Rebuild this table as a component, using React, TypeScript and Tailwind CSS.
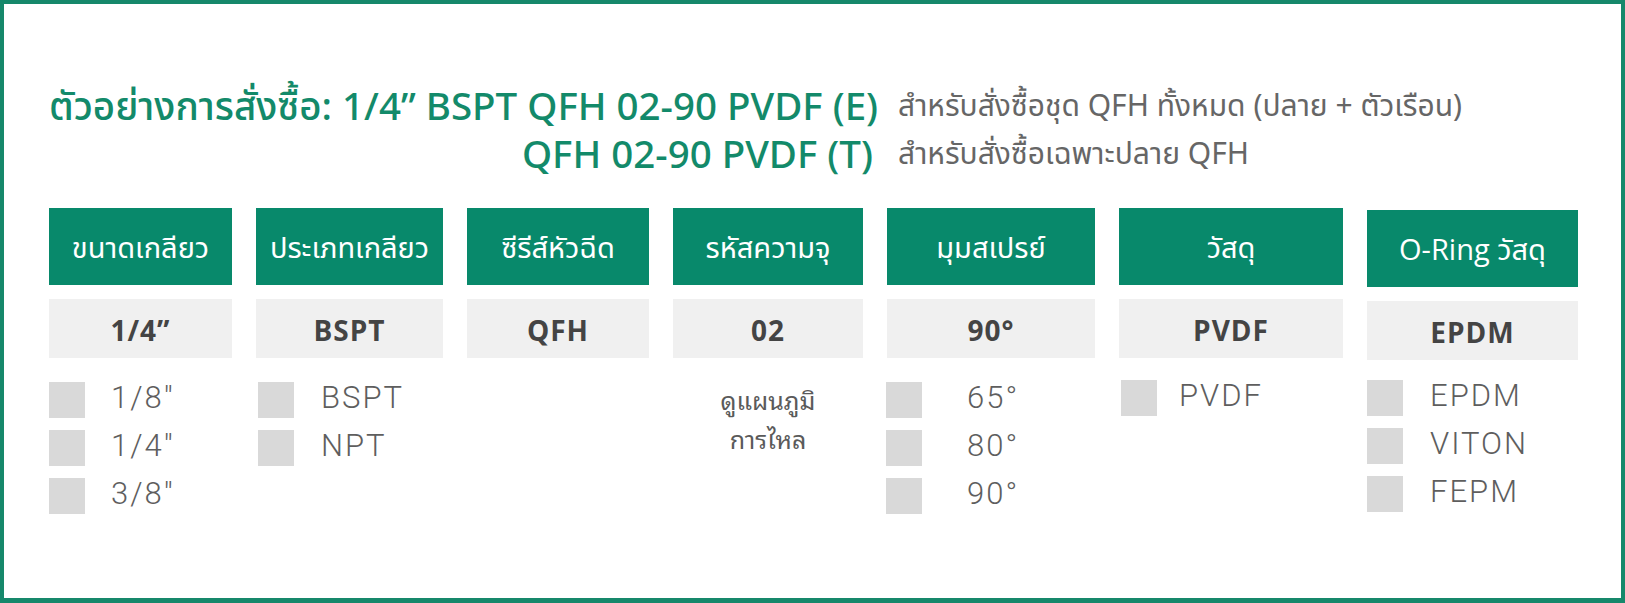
type Col = {
  title: string;
  value: string;
  box: string;
  wrap: string;
  list: string;
  label: string;
  items: string[];
  note?: string[];
};

const cols: Col[] = [
  {
    title: "ขนาดเกลียว",
    value: "1/4”",
    box: "w-[183px]",
    wrap: "",
    list: "mt-[24px]",
    label: "ml-[26px]",
    items: ["1/8″", "1/4″", "3/8″"],
  },
  {
    title: "ประเภทเกลียว",
    value: "BSPT",
    box: "w-[187px]",
    wrap: "",
    list: "mt-[24px] pl-[2px]",
    label: "ml-[27px]",
    items: ["BSPT", "NPT"],
  },
  {
    title: "ซีรีส์หัวฉีด",
    value: "QFH",
    box: "w-[182px]",
    wrap: "",
    list: "mt-[24px]",
    label: "ml-[26px]",
    items: [],
  },
  {
    title: "รหัสความจุ",
    value: "02",
    box: "w-[190px]",
    wrap: "",
    list: "mt-[24px]",
    label: "ml-[26px]",
    items: [],
    note: ["ดูแผนภูมิ", "การไหล"],
  },
  {
    title: "มุมสเปรย์",
    value: "90°",
    box: "w-[208px]",
    wrap: "",
    list: "mt-[24px] -ml-[1px]",
    label: "ml-[45px]",
    items: ["65°", "80°", "90°"],
  },
  {
    title: "วัสดุ",
    value: "PVDF",
    box: "w-[224px]",
    wrap: "",
    list: "mt-[22px] pl-[2px]",
    label: "ml-[22px]",
    items: ["PVDF"],
  },
  {
    title: "O-Ring วัสดุ",
    value: "EPDM",
    box: "w-[211px]",
    wrap: "mt-[2px]",
    list: "mt-[20px]",
    label: "ml-[27px]",
    items: ["EPDM", "VITON", "FEPM"],
  },
];

function Column({ c }: { c: Col }) {
  return (
    <div className={`flex flex-col ${c.box} ${c.wrap}`}>
      <div className="flex h-[77px] items-center justify-center bg-[#08896b] font-['Open_Sans','Noto_Sans_Thai','Noto_Sans',sans-serif] text-[29px] text-white">
        {c.title}
      </div>
      <div className="mt-[14px] flex h-[59px] items-center justify-center bg-[#f0f0f0] pt-[3px] font-['Open_Sans',sans-serif] text-[28px] font-bold tracking-[1px] text-[#444]">
        {c.value}
      </div>
      {c.items.length > 0 && (
        <ul className={`flex flex-col gap-3 ${c.list}`}>
          {c.items.map((it) => (
            <li key={it} className="flex items-center">
              <span className="size-9 shrink-0 bg-[#d9d9d9]" />
              <span
                className={`${c.label} -mt-[5px] font-['Roboto',sans-serif] text-[31px] font-light leading-none tracking-[2px] text-[#5e5e5e]`}
              >
                {it}
              </span>
            </li>
          ))}
        </ul>
      )}
      {c.note && (
        <div className="mt-[22px] text-center font-['Noto_Sans_Thai_Looped','Noto_Sans_Thai','Noto_Sans',sans-serif] text-[25px] font-normal leading-[39px] text-[#5a5a5a]">
          {c.note.map((n) => (
            <div key={n}>{n}</div>
          ))}
        </div>
      )}
    </div>
  );
}

export default function App() {
  return (
    <div className="box-border h-[603px] w-[1625px] border-4 border-b-[5px] border-[#16886b] bg-white pl-[45px] pt-[77px]">
      <div className="grid w-fit grid-cols-[824px_auto] gap-x-[25px] font-['Noto_Sans','Noto_Sans_Thai',sans-serif] leading-[48px]">
        <div className="whitespace-nowrap text-right text-[38.5px] font-medium text-[#138a6a]">
          ตัวอย่างการสั่งซื้อ: 1/4” BSPT QFH 02-90 PVDF (E)
        </div>
        <div className="whitespace-nowrap text-[30px] text-[#666]">
          สำหรับสั่งซื้อชุด QFH ทั้งหมด (ปลาย + ตัวเรือน)
        </div>
        <div className="whitespace-nowrap text-right text-[38.5px] font-medium text-[#138a6a]">
          QFH 02-90 PVDF (T)
        </div>
        <div className="whitespace-nowrap text-[30px] text-[#666]">
          สำหรับสั่งซื้อเฉพาะปลาย QFH
        </div>
      </div>

      <div className="mt-[31px] flex items-start gap-6">
        {cols.map((c) => (
          <Column key={c.title} c={c} />
        ))}
      </div>
    </div>
  );
}
